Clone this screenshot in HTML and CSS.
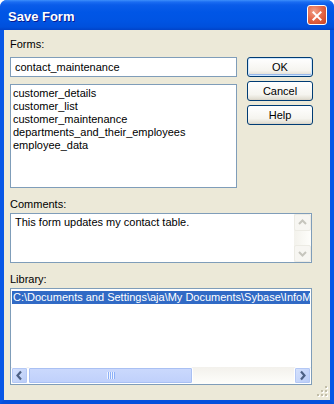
FILE: index.html
```html
<!DOCTYPE html>
<html lang="en">
<head>
    <meta charset="UTF-8">
    <title>Save Form</title>
    <link rel="stylesheet" href="styles.css">
</head>
<body>
    <div class="window">
        <div class="titlebar">
            <span class="title">Save Form</span>
            <span class="close">
                <svg width="20" height="20" viewBox="0 0 20 20">
                    <path d="M6 6 L14 14 M14 6 L6 14" stroke="#fff" stroke-width="2.2" stroke-linecap="square"/>
                </svg>
            </span>
        </div>

        <div class="client">
            <div class="label">Forms:</div>
            <div class="forms-row">
                <div class="forms-col">
                    <div class="textbox">contact_maintenance</div>
                    <ul class="listbox">
                        <li>customer_details</li>
                        <li>customer_list</li>
                        <li>customer_maintenance</li>
                        <li>departments_and_their_employees</li>
                        <li>employee_data</li>
                    </ul>
                </div>
                <div class="buttons">
                    <button class="btn default">OK</button>
                    <button class="btn">Cancel</button>
                    <button class="btn">Help</button>
                </div>
            </div>

            <div class="label label-gap">Comments:</div>
            <div class="memo">
                <div class="memo-text">This form updates my contact table.</div>
                <div class="vscroll">
                    <span class="vbtn">
                        <svg width="15" height="15" viewBox="0 0 15 15"><polyline points="4,9 7.5,5.5 11,9" fill="none" stroke="#c6c5bd" stroke-width="2"/></svg>
                    </span>
                    <span class="vtrack"></span>
                    <span class="vbtn">
                        <svg width="15" height="15" viewBox="0 0 15 15"><polyline points="4,6 7.5,9.5 11,6" fill="none" stroke="#c6c5bd" stroke-width="2"/></svg>
                    </span>
                </div>
            </div>

            <div class="label label-gap">Library:</div>
            <div class="library">
                <div class="library-items">
                    <div class="item selected">C:\Documents and Settings\aja\My Documents\Sybase\InfoM</div>
                </div>
                <div class="hscroll">
                    <span class="hbtn">
                        <svg width="15" height="15" viewBox="0 0 15 15"><polyline points="9,3.5 5.5,7.5 9,11.5" fill="none" stroke="#4d6185" stroke-width="2.2"/></svg>
                    </span>
                    <span class="thumb">
                        <svg width="8" height="7" viewBox="0 0 8 7">
                            <path d="M0.5 0 V7 M2.5 0 V7 M4.5 0 V7 M6.5 0 V7" stroke="#eef3fe" stroke-width="1"/>
                            <path d="M1.5 0 V7 M3.5 0 V7 M5.5 0 V7 M7.5 0 V7" stroke="#8cb0f8" stroke-width="1"/>
                        </svg>
                    </span>
                    <span class="htrack"></span>
                    <span class="hbtn">
                        <svg width="15" height="15" viewBox="0 0 15 15"><polyline points="6,3.5 9.5,7.5 6,11.5" fill="none" stroke="#4d6185" stroke-width="2.2"/></svg>
                    </span>
                </div>
            </div>

            <svg class="grip" width="11" height="11" viewBox="0 0 11 11">
                <g fill="#fff">
                    <rect x="9" y="1" width="2" height="2"/>
                    <rect x="5" y="5" width="2" height="2"/><rect x="9" y="5" width="2" height="2"/>
                    <rect x="1" y="9" width="2" height="2"/><rect x="5" y="9" width="2" height="2"/><rect x="9" y="9" width="2" height="2"/>
                </g>
                <g fill="#c2bea9">
                    <rect x="8" y="0" width="2" height="2"/>
                    <rect x="4" y="4" width="2" height="2"/><rect x="8" y="4" width="2" height="2"/>
                    <rect x="0" y="8" width="2" height="2"/><rect x="4" y="8" width="2" height="2"/><rect x="8" y="8" width="2" height="2"/>
                </g>
            </svg>
        </div>
    </div>
</body>
</html>
```

FILE: styles.css
```css
html, body {
    margin: 0;
    padding: 0;
    background-color: #ffffff;
}

body {
    font-family: "Liberation Sans", Arial, sans-serif;
    font-size: 11px;
    color: #000;
}

.window {
    width: 334px;
    height: 404px;
    display: flex;
    flex-direction: column;
    border-radius: 7px 7px 0 0;
    overflow: hidden;
    background-color: #0055e5;
}

/* title bar */
.titlebar {
    height: 30px;
    flex: none;
    display: flex;
    align-items: center;
    justify-content: space-between;
    padding: 0 7px 0 8px;
    box-sizing: border-box;
    background: linear-gradient(#3d8ffb 0, #1a6cf2 2px, #0a5ce9 5px, #0056e6 12px, #0054e3 70%, #0050dc 90%, #0143c8 100%);
}

.title {
    color: #fff;
    font-weight: bold;
    font-size: 13px;
    text-shadow: 1px 1px #0a1a8f;
    padding-top: 2px;
}

.close {
    width: 20px;
    height: 20px;
    box-sizing: border-box;
    border: 1px solid #fff;
    border-radius: 3px;
    background: radial-gradient(circle at 35% 30%, #f0a088 0, #e5694a 45%, #c9401f 100%);
    display: flex;
}

/* client area */
.client {
    position: relative;
    flex: 1;
    background-color: #ece9d8;
    border-left: 4px solid #0656e6;
    border-right: 4px solid #0656e6;
    border-bottom: 4px solid #0450dc;
    box-shadow: -1px 0 #0030b8, 1px 0 #0030b8;
    padding: 8px 0 0 6px;
}

.label {
    line-height: 13px;
    height: 13px;
    margin-bottom: 6px;
}

.label-gap {
    margin-top: 10px;
    margin-bottom: 2px;
}

.forms-row {
    display: flex;
    gap: 10px;
}

.forms-col {
    width: 227px;
    flex: none;
    display: flex;
    flex-direction: column;
    gap: 7px;
}

.textbox {
    height: 20px;
    box-sizing: border-box;
    border: 1px solid #7f9db9;
    background-color: #fff;
    padding: 0 4px;
    line-height: 18px;
    white-space: nowrap;
}

.listbox {
    list-style: none;
    margin: 0;
    height: 104px;
    box-sizing: border-box;
    border: 1px solid #7f9db9;
    background-color: #fff;
    padding: 2px 2px;
}

.listbox li {
    line-height: 13px;
    white-space: nowrap;
}

.buttons {
    flex: none;
    display: flex;
    flex-direction: column;
    gap: 4px;
}

.btn {
    width: 66px;
    height: 20px;
    box-sizing: border-box;
    border: 1px solid #003c74;
    border-radius: 3px;
    background: linear-gradient(#ffffff, #f5f4ef 70%, #e3e0d5 92%, #d6d0c5);
    font-family: inherit;
    font-size: 11px;
    color: #000;
    padding: 0;
    line-height: 17px;
}

.btn.default {
    box-shadow: inset 0 0 0 1px #cee7ff, inset 0 -1px 0 1px #98b8ea;
}

/* comments memo */
.memo {
    width: 302px;
    height: 50px;
    box-sizing: border-box;
    border: 1px solid #7f9db9;
    background-color: #fff;
    display: flex;
}

.memo-text {
    flex: 1;
    padding: 2px 4px;
    line-height: 13px;
}

.vscroll {
    width: 17px;
    display: flex;
    flex-direction: column;
    background: linear-gradient(to right, #f3f2ec, #fefefb);
}

.vbtn {
    height: 17px;
    box-sizing: border-box;
    border: 1px solid #ecebe4;
    border-radius: 2px;
    background-color: #f7f6f2;
    display: flex;
    align-items: center;
    justify-content: center;
}

.vtrack {
    flex: 1;
}

/* library list */
.library {
    width: 302px;
    height: 97px;
    box-sizing: border-box;
    border: 1px solid #7f9db9;
    background-color: #fff;
    display: flex;
    flex-direction: column;
}

.library-items {
    flex: 1;
    padding: 2px 1px;
    overflow: hidden;
}

.item {
    line-height: 13px;
    white-space: nowrap;
    padding-left: 1px;
}

.item.selected {
    background-color: #316ac5;
    color: #fff;
}

.hscroll {
    height: 17px;
    display: flex;
    background: linear-gradient(#f3f1ec, #fefefb);
}

.hbtn {
    width: 17px;
    box-sizing: border-box;
    border: 1px solid #fff;
    border-radius: 2px;
    background: linear-gradient(135deg, #d7e3fd, #b8cbf7);
    box-shadow: inset 0 0 0 1px #b4c8f5;
    display: flex;
    align-items: center;
    justify-content: center;
}

.thumb {
    width: 165px;
    box-sizing: border-box;
    border: 1px solid #fff;
    border-radius: 2px;
    background: linear-gradient(#cbd9fd, #bfd0fb);
    box-shadow: inset 0 0 0 1px #a9c0f3;
    display: flex;
    align-items: center;
    justify-content: center;
}

.htrack {
    flex: 1;
}

.grip {
    position: absolute;
    right: 2px;
    bottom: 3px;
}
```
